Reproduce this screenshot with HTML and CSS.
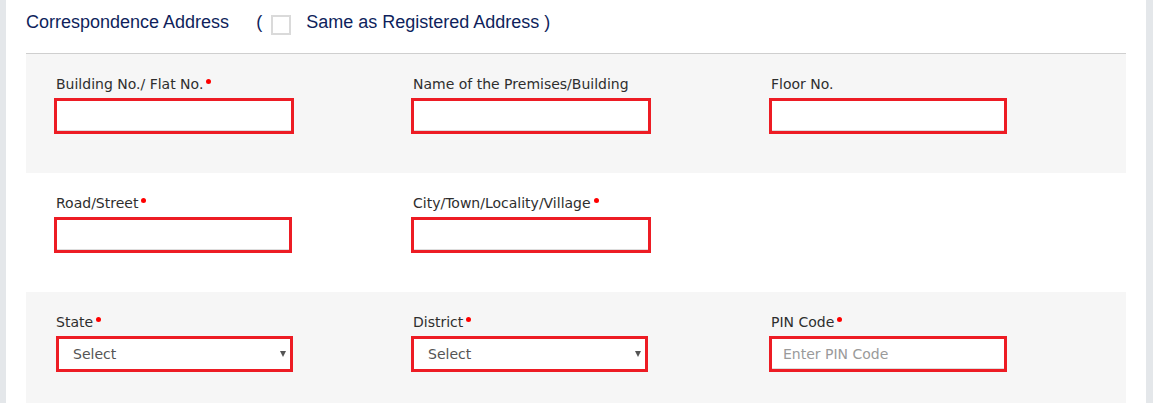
FILE: index.html
```
<!DOCTYPE html>
<html lang="en">
<head>
<meta charset="utf-8">
<title>Correspondence Address</title>
<link rel="stylesheet" href="styles.css">
</head>
<body>
<div class="page">
  <div class="side"></div>
  <main class="panel">
    <div class="head">
      <span class="head-title">Correspondence Address</span>
      <span class="paren paren-open">(</span>
      <span class="checkbox"></span>
      <span class="head-same">Same as Registered Address )</span>
    </div>

    <section class="row shade">
      <div class="field">
        <label class="lbl req">Building No./ Flat No.</label>
        <input class="inp" type="text">
      </div>
      <div class="field">
        <label class="lbl">Name of the Premises/Building</label>
        <input class="inp" type="text">
      </div>
      <div class="field">
        <label class="lbl">Floor No.</label>
        <input class="inp inp-narrow" type="text">
      </div>
    </section>

    <section class="row">
      <div class="field">
        <label class="lbl req">Road/Street</label>
        <input class="inp inp-narrow" type="text">
      </div>
      <div class="field">
        <label class="lbl req">City/Town/Locality/Village</label>
        <input class="inp" type="text">
      </div>
    </section>

    <section class="row shade">
      <div class="field">
        <label class="lbl req">State</label>
        <div class="sel-wrap sel-first">
          <select class="sel"><option>Select</option></select>
        </div>
      </div>
      <div class="field">
        <label class="lbl req">District</label>
        <div class="sel-wrap">
          <select class="sel"><option>Select</option></select>
        </div>
      </div>
      <div class="field">
        <label class="lbl req">PIN Code</label>
        <input class="inp inp-narrow" type="text" placeholder="Enter PIN Code">
      </div>
    </section>
  </main>
  <div class="side side-right"></div>
</div>
</body>
</html>
```
FILE: styles.css
```
html, body {
  margin: 0;
  padding: 0;
  background: #ffffff;
}

.page {
  display: flex;
  height: 403px;
  overflow: hidden;
}

.side {
  width: 6px;
  flex: 0 0 6px;
  background: #e4e7ea;
}

.side-right {
  width: 7px;
  flex: 0 0 7px;
}

.panel {
  flex: 1;
  padding: 0 20px;
  background: #ffffff;
}

.head {
  display: flex;
  align-items: flex-start;
  height: 54px;
  box-sizing: border-box;
  padding-top: 10px;
  border-bottom: 1px solid #cfcfcf;
  font-family: "Liberation Sans", Arial, sans-serif;
  font-size: 18px;
  line-height: 24px;
  color: #0f1f5c;
}

.paren-open {
  margin-left: 27px;
  margin-right: 9px;
}

.checkbox {
  width: 20px;
  height: 20px;
  box-sizing: border-box;
  border: 2px solid #dadada;
  background: #ffffff;
  margin-top: 5px;
  margin-right: 15px;
}

.row {
  display: grid;
  grid-template-columns: 357px 358px 357px;
  height: 119px;
  box-sizing: border-box;
  padding: 20px 0 0 28px;
}

.shade {
  background: #f6f6f6;
}

.field {
  display: flex;
  flex-direction: column;
  align-items: flex-start;
}

.lbl {
  font-family: "DejaVu Sans", Verdana, sans-serif;
  font-size: 14px;
  line-height: 20px;
  color: #2e2e2e;
  margin-bottom: 4px;
  padding-left: 2px;
}

.req::after {
  content: "";
  display: inline-block;
  width: 5px;
  height: 5px;
  border-radius: 50%;
  background: #ff0000;
  margin-left: 3px;
  vertical-align: 5px;
}

.inp {
  width: 240px;
  height: 36px;
  box-sizing: border-box;
  border: 3px solid #ed1c24;
  background: #ffffff;
  box-shadow: inset 0 -1px 0 #dddddd;
  padding: 0 11px;
  margin: 0;
  font-family: "DejaVu Sans", Verdana, sans-serif;
  font-size: 14px;
  color: #555555;
  outline: none;
}

.inp-narrow {
  width: 238px;
}

.inp::placeholder {
  color: #9a9a9a;
}

.sel-wrap {
  position: relative;
  width: 237px;
  height: 36px;
}

.sel-first {
  margin-left: 2px;
}

.sel {
  -webkit-appearance: none;
  appearance: none;
  width: 100%;
  height: 100%;
  box-sizing: border-box;
  border: 3px solid #ed1c24;
  border-radius: 0;
  background: #ffffff;
  padding: 0 0 0 14px;
  margin: 0;
  font-family: "DejaVu Sans", Verdana, sans-serif;
  font-size: 14px;
  color: #555555;
  outline: none;
}

.sel-wrap::after {
  content: "";
  position: absolute;
  right: 7px;
  top: 15px;
  width: 0;
  height: 0;
  border-left: 3px solid transparent;
  border-right: 3px solid transparent;
  border-top: 6px solid #555555;
}
```
